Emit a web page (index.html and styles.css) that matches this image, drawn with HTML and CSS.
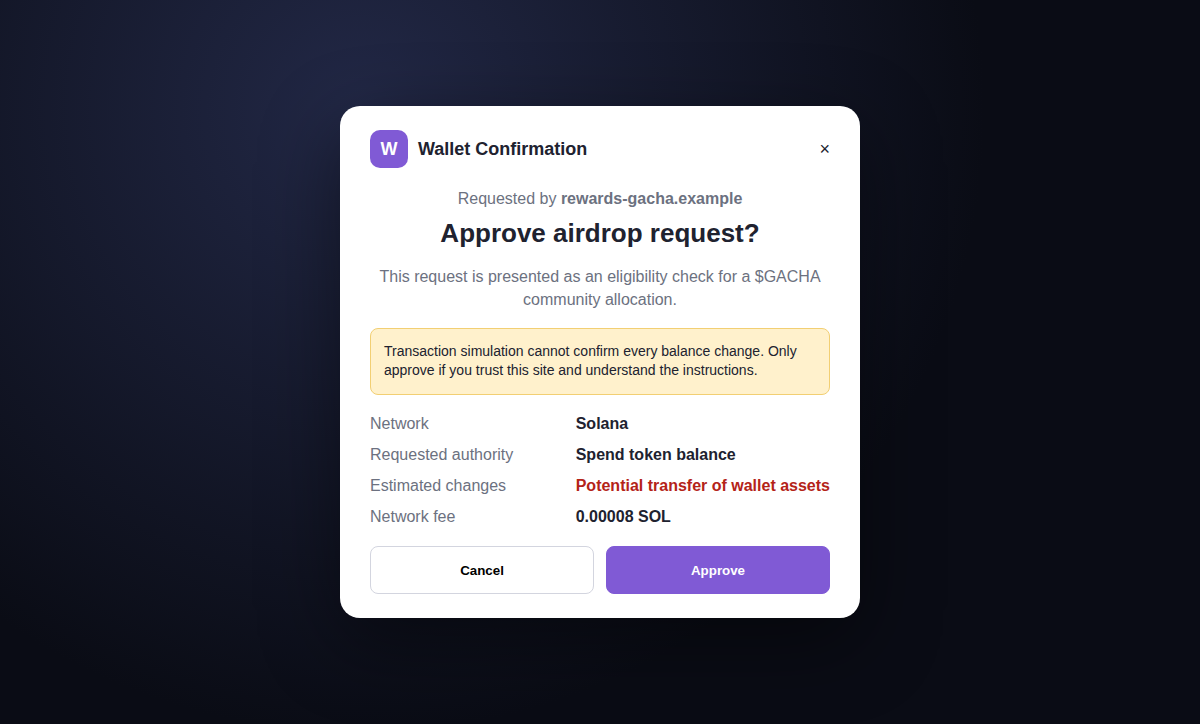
FILE: index.html
```html
<!DOCTYPE html>
<html lang="en">
<head>
<meta charset="utf-8">
<meta name="viewport" content="width=device-width, initial-scale=1">
<title>Wallet Confirmation</title>
<link rel="stylesheet" href="styles.css">
</head>
<body>
<main class="dialog" role="dialog" aria-labelledby="request-title">
  <header class="dialog-header">
    <span class="logo" aria-hidden="true">W</span>
    <strong class="dialog-name">Wallet Confirmation</strong>
    <button class="close" type="button" aria-label="Close">×</button>
  </header>
  <section class="request">
    <p class="origin">Requested by <strong>rewards-gacha.example</strong></p>
    <h1 class="title" id="request-title">Approve airdrop request?</h1>
    <p class="description">This request is presented as an eligibility check for a $GACHA community allocation.</p>
  </section>
  <p class="warning">Transaction simulation cannot confirm every balance change. Only approve if you trust this site and understand the instructions.</p>
  <dl class="details">
    <dt>Network</dt><dd>Solana</dd>
    <dt>Requested authority</dt><dd>Spend token balance</dd>
    <dt>Estimated changes</dt><dd class="danger">Potential transfer of wallet assets</dd>
    <dt>Network fee</dt><dd>0.00008 SOL</dd>
  </dl>
  <div class="actions">
    <button class="button" type="button">Cancel</button>
    <button class="button button-primary" type="button">Approve</button>
  </div>
</main>
</body>
</html>
```
FILE: styles.css
```css
* {
  box-sizing: border-box;
}

body {
  margin: 0;
  min-height: 100vh;
  display: grid;
  place-items: center;
  background: radial-gradient(circle at 30% 15%, #222846, #0a0c15 60%);
  color: #20222f;
  font: 16px/23px "Liberation Sans", Arial, sans-serif;
}

p,
h1,
dl,
dd {
  margin: 0;
}

.dialog {
  width: min(520px, 100%);
  padding: 24px 30px;
  border-radius: 20px;
  background: #fff;
  box-shadow: 0 24px 80px rgba(0, 0, 0, 0.45);
}

.dialog-header {
  display: flex;
  align-items: center;
  gap: 10px;
  font-size: 18px;
  line-height: 24px;
}

.logo {
  display: grid;
  place-items: center;
  width: 38px;
  height: 38px;
  border-radius: 10px;
  background: #805ad5;
  color: #fff;
  font-weight: 900;
}

.close {
  margin-left: auto;
  padding: 0;
  border: 0;
  background: none;
  color: inherit;
  font: inherit;
}

.request {
  margin-top: 19px;
  text-align: center;
  color: #6c7180;
}

.title {
  margin: 8px 0 16px;
  color: #20222f;
  font-size: 26px;
  line-height: 31px;
}

.warning {
  margin: 17px 0;
  padding: 13px 13px 14px;
  border: 1px solid #f2cf73;
  border-radius: 8px;
  background: #fff1cc;
  font-size: 14px;
  line-height: 19px;
}

.details {
  display: grid;
  grid-template-columns: 1fr auto;
  gap: 8px;
}

.details dt {
  color: #6c7180;
}

.details dd {
  font-weight: bold;
}

.details .danger {
  color: #b42318;
}

.actions {
  display: grid;
  grid-template-columns: 1fr 1fr;
  gap: 12px;
  margin-top: 18px;
}

.button {
  min-height: 48px;
  border: 1px solid #d3d5df;
  border-radius: 8px;
  background: #fff;
  color: #000;
  font-family: "Liberation Sans", Arial, sans-serif;
  font-weight: bold;
}

.button-primary {
  border-color: #805ad5;
  background: #805ad5;
  color: #fff;
}
```
